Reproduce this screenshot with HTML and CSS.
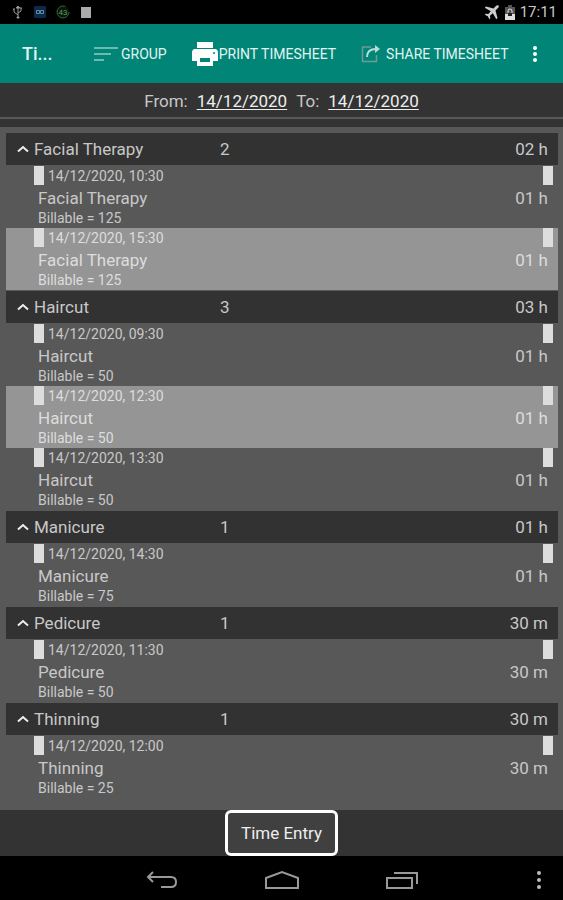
FILE: index.html
```
<!DOCTYPE html>
<html lang="en">
<head>
    <meta charset="UTF-8">
    <meta name="viewport" content="width=device-width, initial-scale=1.0">
    <title>Timesheet</title>
    <link rel="stylesheet" href="styles.css">
</head>
<body>
    <div class="status-bar">
        <div class="status-icons">
            <svg width="12" height="14" viewBox="0 0 12 14" fill="none" stroke="#999"><path d="M6 2v10M6 10L2 7V4M6 8l3-2V3"/><path d="M4 3l2-2 2 2zM5 12h2v1H5zM1 4h2M8 3h2" fill="#999"/></svg>
            <svg width="12" height="12" viewBox="0 0 12 12"><rect width="12" height="12" rx="1" fill="#0c2a48"/><path d="M2.5 4.500h3v3h-3zM6.500 4.500h3v3h-3z" fill="none" stroke="#6688a5"/></svg>
            <svg width="14" height="14" viewBox="0 0 14 14"><circle cx="7" cy="7" r="6" fill="#0b160b" stroke="#2f6b30" stroke-dasharray="30 8"/><text x="7" y="10" class="badge-text">43</text></svg>
            <svg width="11" height="13" viewBox="0 0 11 13"><rect x="1" y="1" width="10" height="11" fill="#aaa"/></svg>
        </div>
        <div class="status-right">
            <svg width="16" height="16" viewBox="0 0 16 16"><path d="M14.500 1.500c-1-.8-2 0-2.800.8L9.500 4.500 2 2.500.8 3.700l6 3.500-2.500 2.800-2.500-.3-1 1 3 1.500 1.500 3 1-1-.3-2.500 2.800-2.500 3.500 6 1.200-1.200-2-7.500 2.200-2.200c.8-.8 1.600-1.800.8-2.800z" fill="#ccc"/></svg>
            <svg width="10" height="15" viewBox="0 0 10 15"><path d="M3 0h4v2h3v13H0V2h3z" fill="#555"/><path d="M0 9h10v6H0z" fill="#ddd"/><path d="M3 8V6a2 2 0 014 0v2" fill="none" stroke="#ddd"/><path d="M3 8h4v3H3z" fill="#222"/></svg>
            <span>17:11</span>
        </div>
    </div>

    <header class="toolbar">
        <h1 class="title">Ti...</h1>
        <button class="tool group-btn">
            <svg width="26" height="18" viewBox="0 0 26 18" stroke="#6dbab0" stroke-width="2"><path d="M1 3h24M1 9h17M1 15h10"/></svg>
            Group
        </button>
        <button class="tool print-btn">
            <svg width="28" height="26" viewBox="0 0 28 26"><path d="M6 1h16v6H6z" fill="#fff"/><path d="M4 8h20q3 0 3 4v8h-5v5H6v-5H1v-8q0-4 3-4z" fill="#fff"/><path d="M9 17h10v4H9z" fill="#008577"/><circle cx="23" cy="12" r="1" fill="#008577"/></svg>
            Print timesheet
        </button>
        <button class="tool share-btn">
            <svg width="20" height="18" viewBox="0 0 20 18" fill="none"><path d="M10 2H1.500v14.500h14V10" stroke="#6f9c94" stroke-width="1.500"/><path d="M6 12c0-5 3-8 9-8" stroke="#b9dcd7" stroke-width="2"/><path d="M14 0l5 4-5 4z" fill="#b9dcd7"/></svg>
            Share timesheet
        </button>
        <button class="more-btn" aria-label="More options">
            <svg width="4" height="16" viewBox="0 0 4 16" fill="#fff"><circle cx="2" cy="2" r="2"/><circle cx="2" cy="8" r="2"/><circle cx="2" cy="14" r="2"/></svg>
        </button>
    </header>

    <div class="date-range">
        <span>From:</span> <a href="#">14/12/2020</a>
        <span>To:</span> <a href="#">14/12/2020</a>
    </div>

    <main class="list">
        <section class="group">
            <button class="group-header">
                <svg class="chevron" viewBox="0 0 12 8"><path d="M1 6.500L6 2l5 4.500"/></svg>
                <span class="name">Facial Therapy</span><span class="count">2</span><span class="total">02 h</span>
            </button>
            <div class="entry">
                <div class="date">14/12/2020, 10:30</div>
                <div class="task"><span>Facial Therapy</span><span>01 h</span></div>
                <div class="billable">Billable = 125</div>
            </div>
            <div class="entry selected">
                <div class="date">14/12/2020, 15:30</div>
                <div class="task"><span>Facial Therapy</span><span>01 h</span></div>
                <div class="billable">Billable = 125</div>
            </div>
        </section>

        <section class="group">
            <button class="group-header">
                <svg class="chevron" viewBox="0 0 12 8"><path d="M1 6.500L6 2l5 4.500"/></svg>
                <span class="name">Haircut</span><span class="count">3</span><span class="total">03 h</span>
            </button>
            <div class="entry">
                <div class="date">14/12/2020, 09:30</div>
                <div class="task"><span>Haircut</span><span>01 h</span></div>
                <div class="billable">Billable = 50</div>
            </div>
            <div class="entry selected">
                <div class="date">14/12/2020, 12:30</div>
                <div class="task"><span>Haircut</span><span>01 h</span></div>
                <div class="billable">Billable = 50</div>
            </div>
            <div class="entry">
                <div class="date">14/12/2020, 13:30</div>
                <div class="task"><span>Haircut</span><span>01 h</span></div>
                <div class="billable">Billable = 50</div>
            </div>
        </section>

        <section class="group">
            <button class="group-header">
                <svg class="chevron" viewBox="0 0 12 8"><path d="M1 6.500L6 2l5 4.500"/></svg>
                <span class="name">Manicure</span><span class="count">1</span><span class="total">01 h</span>
            </button>
            <div class="entry">
                <div class="date">14/12/2020, 14:30</div>
                <div class="task"><span>Manicure</span><span>01 h</span></div>
                <div class="billable">Billable = 75</div>
            </div>
        </section>

        <section class="group">
            <button class="group-header">
                <svg class="chevron" viewBox="0 0 12 8"><path d="M1 6.500L6 2l5 4.500"/></svg>
                <span class="name">Pedicure</span><span class="count">1</span><span class="total">30 m</span>
            </button>
            <div class="entry">
                <div class="date">14/12/2020, 11:30</div>
                <div class="task"><span>Pedicure</span><span>30 m</span></div>
                <div class="billable">Billable = 50</div>
            </div>
        </section>

        <section class="group">
            <button class="group-header">
                <svg class="chevron" viewBox="0 0 12 8"><path d="M1 6.500L6 2l5 4.500"/></svg>
                <span class="name">Thinning</span><span class="count">1</span><span class="total">30 m</span>
            </button>
            <div class="entry">
                <div class="date">14/12/2020, 12:00</div>
                <div class="task"><span>Thinning</span><span>30 m</span></div>
                <div class="billable">Billable = 25</div>
            </div>
        </section>
    </main>

    <div class="bottom-bar">
        <button class="entry-btn">Time Entry</button>
    </div>

    <nav class="nav-bar">
        <span></span>
        <button aria-label="Back">
            <svg width="32" height="20" viewBox="0 0 32 20"><path d="M7 2L2 7l5 5M2 7h23q5 0 5 5t-5 5H15"/></svg>
        </button>
        <button aria-label="Home">
            <svg width="36" height="20" viewBox="0 0 36 20"><path d="M2 18V8l16-6 16 6v10z"/></svg>
        </button>
        <button aria-label="Recent apps">
            <svg width="34" height="20" viewBox="0 0 34 20"><path d="M2 8h25v10H2zM9 3h23v11"/></svg>
        </button>
        <button class="nav-more" aria-label="Menu">
            <svg width="6" height="20" viewBox="0 0 6 20"><circle cx="3" cy="3" r="2"/><circle cx="3" cy="10" r="2"/><circle cx="3" cy="17" r="2"/></svg>
        </button>
    </nav>
</body>
</html>
```
FILE: styles.css
```
* {
    box-sizing: border-box;
}

body {
    font-family: Roboto, sans-serif;
    margin: 0;
    min-height: 100vh;
    display: flex;
    flex-direction: column;
    background: #585858;
    color: #c8c8c8;
}

button {
    font-family: inherit;
    color: inherit;
    background: none;
    border: none;
    padding: 0;
    cursor: pointer;
}

svg {
    display: block;
    flex: none;
}

/* Status bar */
.status-bar {
    display: flex;
    justify-content: space-between;
    align-items: center;
    height: 24px;
    padding: 0 6px 0 12px;
    background: #000;
    font-size: 15px;
}

.status-icons {
    display: flex;
    align-items: center;
    gap: 10px;
}

.status-right {
    display: flex;
    align-items: center;
    gap: 5px;
}

.badge-text {
    font-size: 8px;
    fill: #5f9a5f;
    text-anchor: middle;
}

/* Toolbar */
.toolbar {
    display: flex;
    align-items: center;
    height: 59px;
    padding: 0 22px;
    background: #008577;
    color: #e2f3f1;
}

.title {
    width: 32px;
    margin: 0;
    font-size: 18px;
    font-weight: 500;
    white-space: nowrap;
}

.tool {
    display: flex;
    align-items: center;
    font-size: 14px;
    text-transform: uppercase;
    white-space: nowrap;
}

.group-btn {
    gap: 2px;
    margin-left: 39px;
}

.print-btn {
    margin-left: 24px;
}

.share-btn {
    gap: 5px;
    margin-left: 25px;
}

.more-btn {
    margin-left: auto;
    padding: 0 4px;
}

/* Date range */
.date-range {
    display: flex;
    justify-content: center;
    gap: 9px;
    height: 44px;
    padding-top: 8px;
    background: linear-gradient(#585858, #585858) 0 34px / 100% 2px no-repeat #333;
    font-size: 17px;
    line-height: 20px;
}

.date-range a {
    color: #eee;
    text-underline-offset: 2px;
}

/* Grouped entries */
.list {
    flex: 1;
    padding: 6px 5px 6px 6px;
}

.group {
    margin-bottom: 1px;
}

.group-header {
    display: grid;
    grid-template-columns: 28px 186px 1fr auto;
    align-items: center;
    width: 100%;
    height: 32px;
    margin-bottom: 1px;
    padding-right: 10px;
    background: #323232;
    font-size: 17px;
    text-align: left;
}

.chevron {
    width: 12px;
    height: 8px;
    margin-left: 11px;
    fill: none;
    stroke: #eee;
    stroke-width: 2;
}

.entry {
    height: 62px;
    padding: 0 10px 0 32px;
    background: linear-gradient(#ddd, #ddd) 28px 0 / 10px 19px no-repeat,
        linear-gradient(#ddd, #ddd) right 5px top 0 / 10px 19px no-repeat;
}

.entry.selected {
    background-color: #959595;
    color: #ddd;
}

.date {
    padding-left: 10px;
    font-size: 14px;
    line-height: 21px;
}

.task {
    display: flex;
    justify-content: space-between;
    font-size: 17px;
    line-height: 22px;
}

.billable {
    font-size: 14px;
    line-height: 19px;
}

/* Bottom bar */
.bottom-bar {
    display: flex;
    justify-content: center;
    height: 46px;
    background: #333;
}

.entry-btn {
    padding: 0 13px;
    border: 3px solid #fff;
    border-radius: 6px;
    background: #404040;
    color: #eee;
    font-size: 17px;
}

/* System navigation */
.nav-bar {
    display: grid;
    grid-template-columns: 1fr 120px 120px 120px 1fr;
    align-items: center;
    height: 44px;
    padding: 4px 21px 0;
    background: #000;
}

.nav-bar button {
    justify-self: center;
}

.nav-bar svg {
    fill: none;
    stroke: #999;
    stroke-width: 2;
}

.nav-bar .nav-more {
    justify-self: end;
}

.nav-more circle {
    fill: #bbb;
    stroke: none;
}
```
